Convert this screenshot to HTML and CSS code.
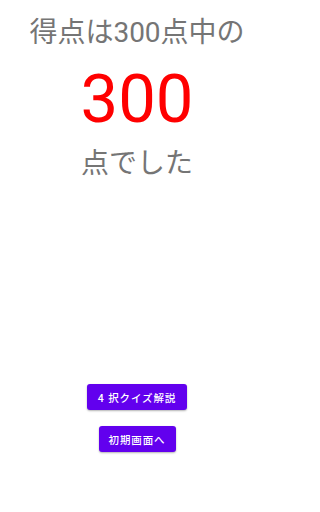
FILE: index.html
```html
<!DOCTYPE html>
<html lang="ja">
<head>
<meta charset="utf-8">
<link rel="stylesheet" href="styles.css">
</head>
<body>
<main class="screen">
  <p class="label">得点は300点中の</p>
  <p class="score">300</p>
  <p class="label label-end">点でした</p>
  <div class="actions">
    <button class="btn btn-quiz">4 択クイズ解説</button>
    <button class="btn btn-home">初期画面へ</button>
  </div>
</main>
</body>
</html>
```

FILE: styles.css
```css
html, body {
  margin: 0;
  padding: 0;
  background: #ffffff;
}
.screen {
  width: 274px;
  height: 512px;
  display: flex;
  flex-direction: column;
  align-items: center;
  font-family: Roboto, "Noto Sans CJK JP", sans-serif;
  padding-top: 15px;
  box-sizing: border-box;
}
.label {
  margin: 0;
  font-size: 28px;
  line-height: 36px;
  color: #757575;
}
.score {
  margin: 6px 0 5px;
  font-size: 67px;
  line-height: 84px;
  color: #ff0000;
}
.label-end {
  margin-top: 0;
}
.actions {
  margin-top: 202px;
  display: flex;
  flex-direction: column;
  align-items: center;
  gap: 16px;
}
.btn {
  height: 26px;
  border: none;
  border-radius: 3px;
  background: #6200ee;
  color: #ffffff;
  font-family: Roboto, "Noto Sans CJK JP", sans-serif;
  font-size: 10.5px;
  font-weight: 500;
  letter-spacing: 0.9px;
  box-shadow: 0 1px 2px rgba(0, 0, 0, 0.3);
  padding: 0;
  display: flex;
  align-items: center;
  justify-content: center;
}
.btn-quiz {
  width: 100px;
}
.btn-home {
  width: 77px;
}
```
